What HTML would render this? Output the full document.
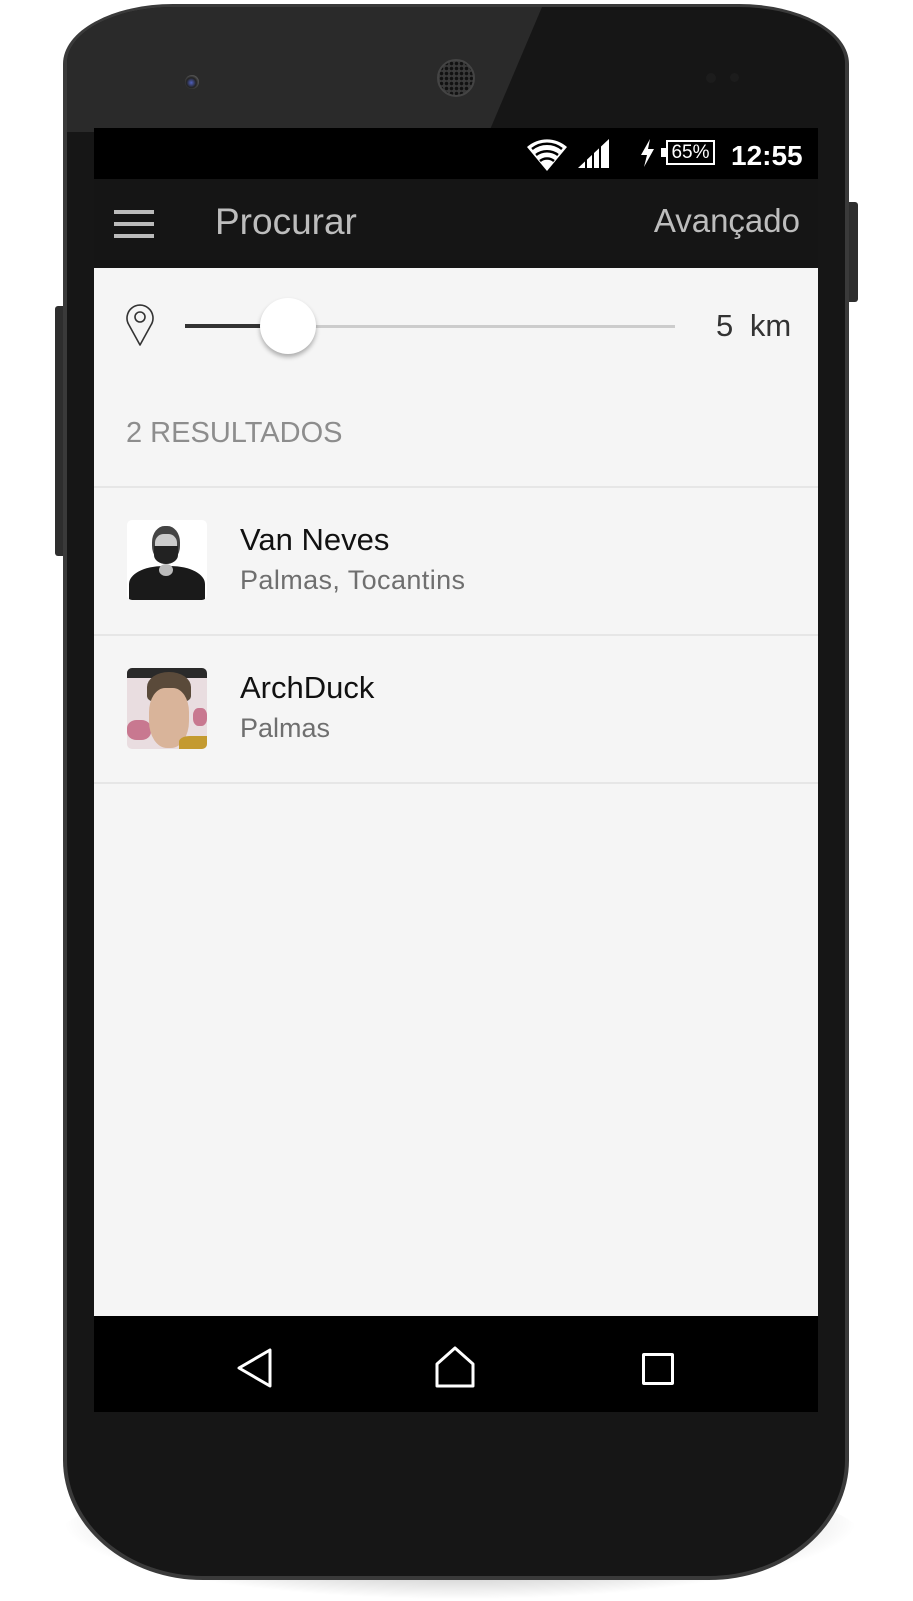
<!DOCTYPE html>
<html><head><meta charset="utf-8"><style>
*{margin:0;padding:0;box-sizing:border-box}
body{width:913px;height:1601px;background:#fff;position:relative;overflow:hidden;font-family:"Liberation Sans",Roboto,sans-serif}
.shadow{position:absolute;left:60px;top:1470px;width:800px;height:130px;border-radius:50%;background:radial-gradient(ellipse at 50% 40%,rgba(0,0,0,.45) 0,rgba(0,0,0,.2) 45%,rgba(0,0,0,0) 70%)}
.phone{position:absolute;left:63px;top:4px;width:786px;height:1576px;background:#3a3a3a;border-radius:110px 110px 140px 140px / 60px 60px 120px 120px}
.inner{position:absolute;left:67px;top:7px;width:778px;height:1569px;background:#161616;border-radius:106px 106px 136px 136px / 56px 56px 116px 116px;overflow:hidden}
.gloss{position:absolute;left:0;top:0;width:560px;height:130px;background:#2a2a2a;clip-path:polygon(0 0,475px 0,422px 125px,0 125px)}
.btn{position:absolute;background:#2e2e2e}
.screen{position:absolute;left:94px;top:128px;width:724px;height:1284px;background:#f5f5f5;overflow:hidden}
.status{position:absolute;left:0;top:0;width:724px;height:51px;background:#000}
.appbar{position:absolute;left:0;top:51px;width:724px;height:89px;background:#151515}
.nav{position:absolute;left:0;top:1188px;width:724px;height:96px;background:#000}
.t{position:absolute;white-space:nowrap}
.div{position:absolute;left:0;width:724px;height:2px;background:#e6e6e6}
</style></head><body>
<div class="shadow"></div>
<div class="btn" style="left:848px;top:202px;width:10px;height:100px;border-radius:0 3px 3px 0"></div>
<div class="btn" style="left:55px;top:306px;width:9px;height:250px;border-radius:3px 0 0 3px"></div>
<div class="phone"></div>
<div class="inner"><div class="gloss"></div></div>
<div style="position:absolute;left:185px;top:75px;width:14px;height:14px;border-radius:50%;background:radial-gradient(circle at 45% 55%,#5060c0 0,#222 45%,#555 70%,#333 100%)"></div>
<div style="position:absolute;left:437px;top:59px;width:38px;height:38px;border-radius:50%;background:radial-gradient(#111 1.5px,#3a3a3a 2px) 0 0/5px 5px;border:2px solid #444"></div>
<div style="position:absolute;left:706px;top:73px;width:10px;height:10px;border-radius:50%;background:#1c1c1c"></div>
<div style="position:absolute;left:730px;top:73px;width:9px;height:9px;border-radius:50%;background:#1c1c1c"></div>

<div class="screen">
 <div class="status">
  <svg style="position:absolute;left:432px;top:10px" width="42" height="34" viewBox="0 0 42 34"><path d="M21 33 L1 9 A30 30 0 0 1 41 9 Z" fill="#fff"/><path d="M6 11 A24 24 0 0 1 36 11" stroke="#000" stroke-width="2.5" fill="none"/><path d="M10 17 A18 18 0 0 1 32 17" stroke="#000" stroke-width="2.5" fill="none"/><path d="M14 23 A11 11 0 0 1 28 23" stroke="#000" stroke-width="2.5" fill="none"/></svg>
  <svg style="position:absolute;left:484px;top:11px" width="32" height="29" viewBox="0 0 32 29"><path d="M31 0 V29 H0 Z" fill="#fff"/><path d="M8 29V19M15 29V12M22 29V5" stroke="#000" stroke-width="2"/></svg>
  <svg style="position:absolute;left:545px;top:11px" width="17" height="28" viewBox="0 0 17 28"><path d="M11 0 L2 16 H8 L5 28 L15 10 H9 Z" fill="#fff"/></svg>
  <div style="position:absolute;left:572px;top:12px;width:49px;height:25px;border:2px solid #fff;color:#fff;font-size:19px;line-height:21px;text-align:center">65%</div>
  <div style="position:absolute;left:567px;top:20px;width:6px;height:9px;background:#fff"></div>
  <div class="t" style="left:637px;top:11px;color:#fff;font-size:28px;line-height:34px;font-weight:bold">12:55</div>
 </div>
 <div class="appbar">
  <div style="position:absolute;left:20px;top:31px;width:40px;height:4px;background:#bbb;box-shadow:0 12px 0 #bbb,0 24px 0 #bbb"></div>
  <div class="t" style="left:121px;top:21px;color:#bdbdbd;font-size:37px;line-height:44px">Procurar</div>
  <div class="t" style="right:18px;top:20px;color:#bdbdbd;font-size:33px;line-height:44px">Avançado</div>
 </div>
 <svg style="position:absolute;left:31px;top:175px" width="30" height="44" viewBox="0 0 30 44"><path d="M15 42 L4 22 A13 13 0 1 1 26 22 Z" fill="none" stroke="#333" stroke-width="1.6" stroke-linejoin="round"/><circle cx="15" cy="14" r="5" fill="none" stroke="#333" stroke-width="1.6"/></svg>
 <div style="position:absolute;left:91px;top:196px;width:100px;height:4px;background:#333"></div>
 <div style="position:absolute;left:190px;top:197px;width:391px;height:3px;background:#ccc"></div>
 <div style="position:absolute;left:166px;top:170px;width:56px;height:56px;border-radius:50%;background:#fff;box-shadow:0 3px 5px rgba(0,0,0,.3)"></div>
 <div class="t" style="left:622px;top:180px;color:#333;font-size:31px;line-height:36px;word-spacing:8px">5 km</div>
 <div class="t" style="left:32px;top:288px;color:#8d8d8d;font-size:29px;line-height:34px">2 RESULTADOS</div>
 <div class="div" style="top:358px"></div>
 <div style="position:absolute;left:33px;top:392px;width:80px;height:80px;border-radius:5px;background:#fff;overflow:hidden">
  <div style="position:absolute;left:25px;top:6px;width:28px;height:36px;border-radius:45%;background:#444"></div>
  <div style="position:absolute;left:28px;top:14px;width:22px;height:22px;border-radius:40%;background:#ccc"></div>
  <div style="position:absolute;left:27px;top:26px;width:24px;height:18px;border-radius:0 0 50% 50%;background:#222"></div>
  <div style="position:absolute;left:2px;top:46px;width:76px;height:40px;border-radius:45% 45% 0 0;background:#1a1a1a"></div>
  <div style="position:absolute;left:32px;top:44px;width:14px;height:12px;border-radius:50%;background:#bbb"></div>
 </div>
 <div class="t" style="left:146px;top:394px;color:#111;font-size:31px;line-height:36px">Van Neves</div>
 <div class="t" style="left:146px;top:436px;color:#6f6f6f;font-size:27px;line-height:32px;letter-spacing:0.4px">Palmas, Tocantins</div>
 <div class="div" style="top:506px"></div>
 <div style="position:absolute;left:33px;top:540px;width:80px;height:81px;border-radius:5px;overflow:hidden;background:#e9dde0">
  <div style="position:absolute;left:0;top:0;width:80px;height:10px;background:#2a2a2a"></div>
  <div style="position:absolute;left:0;top:52px;width:24px;height:20px;background:#c87890;border-radius:40%"></div>
  <div style="position:absolute;left:66px;top:40px;width:14px;height:18px;background:#c87890;border-radius:40%"></div>
  <div style="position:absolute;left:20px;top:4px;width:44px;height:30px;border-radius:50% 50% 20% 20%;background:#5a4a3a"></div>
  <div style="position:absolute;left:22px;top:20px;width:40px;height:60px;border-radius:40% 40% 45% 45%;background:#d9b49a"></div>
  <div style="position:absolute;left:52px;top:68px;width:28px;height:14px;background:#c49a30;border-radius:40% 0 0 0"></div>
 </div>
 <div class="t" style="left:146px;top:542px;color:#111;font-size:31px;line-height:36px">ArchDuck</div>
 <div class="t" style="left:146px;top:584px;color:#6f6f6f;font-size:27px;line-height:32px">Palmas</div>
 <div class="div" style="top:654px"></div>
 <div class="nav">
  <svg style="position:absolute;left:142px;top:32px" width="38" height="40" viewBox="0 0 38 40"><path d="M34 2 V38 L3 20 Z" fill="none" stroke="#fff" stroke-width="3" stroke-linejoin="round"/></svg>
  <svg style="position:absolute;left:340px;top:30px" width="42" height="42" viewBox="0 0 42 42"><path d="M3 40 V18 L21 2 L39 18 V40 Z" fill="none" stroke="#fff" stroke-width="3" stroke-linejoin="round"/></svg>
  <div style="position:absolute;left:548px;top:37px;width:32px;height:32px;border:3px solid #fff;border-radius:2px"></div>
 </div>
</div>
</body></html>
